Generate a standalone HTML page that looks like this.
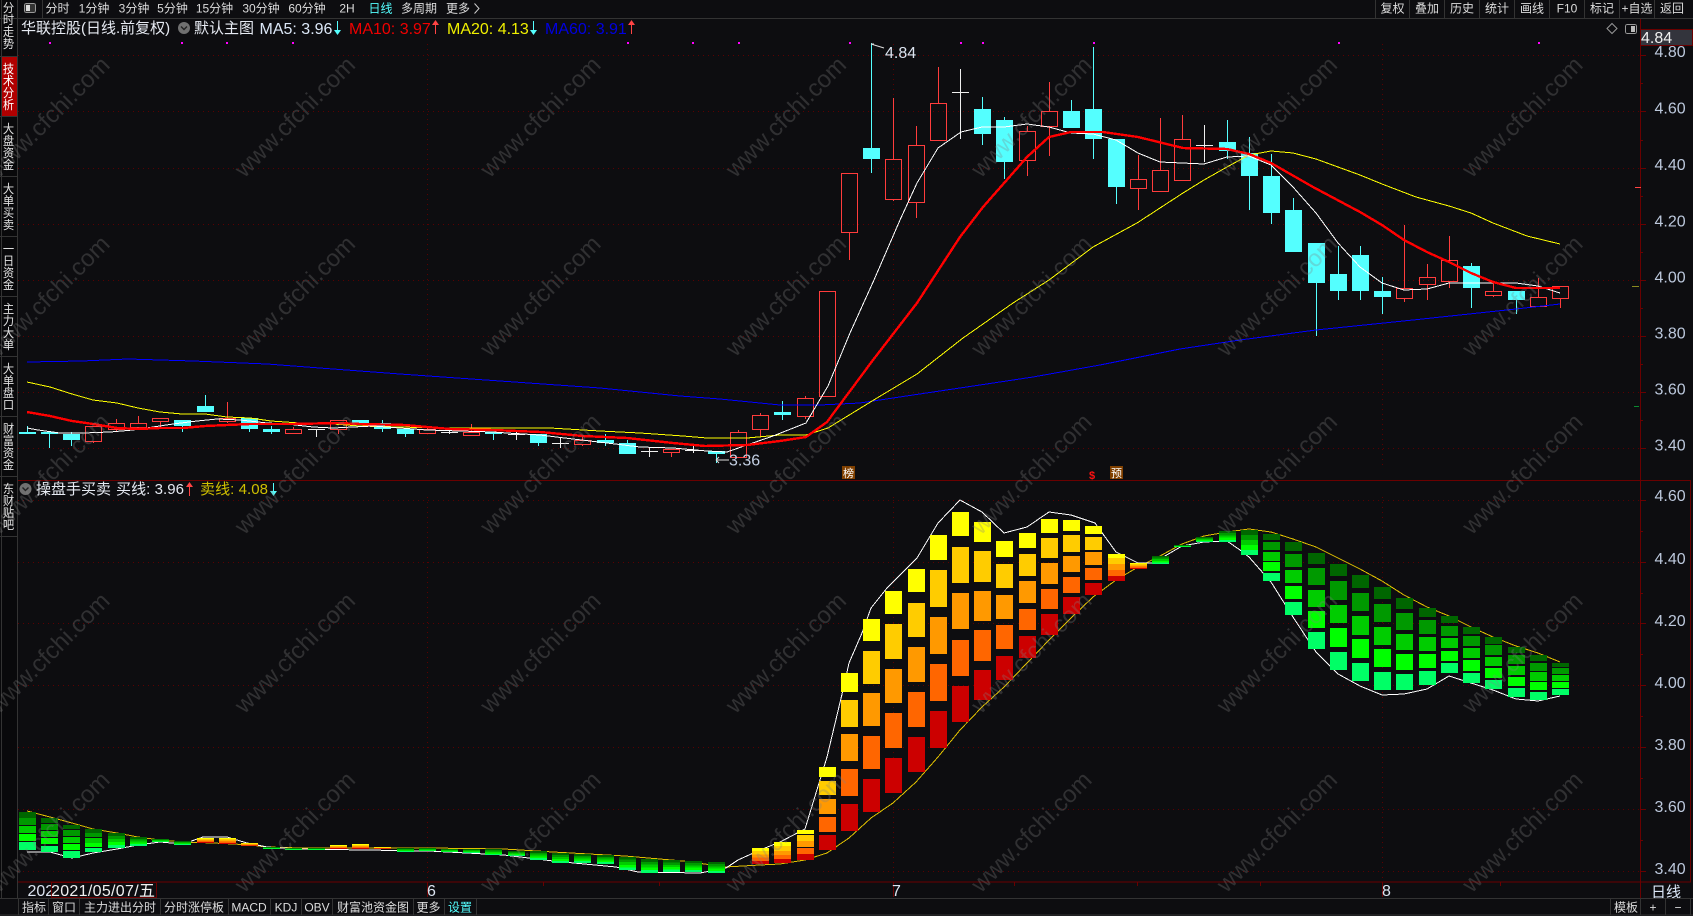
<!DOCTYPE html>
<html lang="zh"><head><meta charset="utf-8"><title>华联控股</title>
<style>
html,body{margin:0;padding:0;background:#0d0d10;width:1693px;height:916px;overflow:hidden}
svg{position:absolute;left:0;top:0;display:block}
text{font-family:"Liberation Sans","Noto Sans CJK SC",sans-serif}
.tb{font-size:12px;fill:#dcdcdc;text-anchor:middle;font-family:"Liberation Sans","WenQuanYi Zen Hei","Noto Sans CJK SC",sans-serif}
.ax{font-size:16px;fill:#bcc8dc}
.lg{font-size:15px}
.lt{font-size:16px}
.side{position:absolute;left:2px;width:13px;font:12px/12px "WenQuanYi Zen Hei","Noto Sans CJK SC",sans-serif;color:#e2e2e2;text-align:center;word-break:break-all;transform:scaleX(.94)}
.wm text{font-size:24px;fill:#808080;fill-opacity:.3;text-anchor:middle}
</style></head><body>
<svg width="1693" height="916" viewBox="0 0 1693 916" shape-rendering="crispEdges">
<defs>
<linearGradient id="w" x1="0" y1="0" x2="0" y2="1"><stop offset="0" stop-color="#ff0"/><stop offset=".2" stop-color="#ff0"/><stop offset=".2" stop-color="#fc0"/><stop offset=".4" stop-color="#fc0"/><stop offset=".4" stop-color="#f90"/><stop offset=".6" stop-color="#f90"/><stop offset=".6" stop-color="#f60"/><stop offset=".8" stop-color="#f60"/><stop offset=".8" stop-color="#c00"/><stop offset="1" stop-color="#c00"/></linearGradient>
<linearGradient id="g" x1="0" y1="0" x2="0" y2="1"><stop offset="0" stop-color="#060"/><stop offset=".2" stop-color="#060"/><stop offset=".2" stop-color="#090"/><stop offset=".4" stop-color="#090"/><stop offset=".4" stop-color="#0c0"/><stop offset=".6" stop-color="#0c0"/><stop offset=".6" stop-color="#0f0"/><stop offset=".8" stop-color="#0f0"/><stop offset=".8" stop-color="#0f6"/><stop offset="1" stop-color="#0f6"/></linearGradient>
</defs>

<!-- sidebar -->
<rect x="0" y="0" width="17" height="898" fill="#09090b"/>
<rect x="1" y="57" width="16" height="59" fill="#b00000"/>
<path d="M17.5 0V898M1.5 0V898M0 56.5H17M0 116.5H17M0 176.5H17M0 236.5H17M0 296.5H17M0 356.5H17M0 416.5H17M0 476.5H17M0 536.5H17" stroke="#333" fill="none"/>

<!-- top toolbar -->
<path d="M0 18.5H1693M42.5 0V18M1375.5 0V18M1409.5 0V18M1444.5 0V18M1479.5 0V18M1514.5 0V18M1549.5 0V18M1584.5 0V18M1619.5 0V18M1654.5 0V18" stroke="#333" fill="none"/>
<rect x="24.5" y="3.5" width="11" height="9" rx="2" fill="#333" stroke="#999"/><rect x="26" y="5" width="4" height="6" fill="#ddd"/>
<text class="tb" x="57.5" y="12.5">分时</text><text class="tb" x="94" y="12.5">1分钟</text><text class="tb" x="134" y="12.5">3分钟</text><text class="tb" x="172.5" y="12.5">5分钟</text><text class="tb" x="214.5" y="12.5">15分钟</text><text class="tb" x="261" y="12.5">30分钟</text><text class="tb" x="307" y="12.5">60分钟</text><text class="tb" x="347" y="12.5">2H</text><text class="tb" x="380.5" y="12.5" style="fill:#5ff">日线</text><text class="tb" x="419" y="12.5">多周期</text><text class="tb" x="458" y="12.5">更多</text>
<path d="M474.5 3.5L479 8.5L474.5 13.5" stroke="#ccc" fill="none" shape-rendering="auto"/>
<text class="tb" x="1392.5" y="12.5">复权</text><text class="tb" x="1427" y="12.5">叠加</text><text class="tb" x="1462" y="12.5">历史</text><text class="tb" x="1497" y="12.5">统计</text><text class="tb" x="1532" y="12.5">画线</text><text class="tb" x="1567" y="12.5">F10</text><text class="tb" x="1602" y="12.5">标记</text><text class="tb" x="1637" y="12.5">+自选</text><text class="tb" x="1672" y="12.5">返回</text>

<!-- grid -->
<g stroke="#5c0000" stroke-dasharray="1 4" fill="none">
<path d="M18 55.5H1640M18 111.5H1640M18 168.5H1640M18 224.5H1640M18 280.5H1640M18 336.5H1640M18 392.5H1640M18 448.5H1640M18 500.5H1640M18 562.5H1640M18 623.5H1640M18 685.5H1640M18 747.5H1640M18 809.5H1640M18 871.5H1640"/>
<path d="M427.5 44V466M893.5 44V466M1382.5 44V466M427.5 497V881M893.5 497V881M1382.5 497V881"/>
</g>

<!-- frame -->
<path d="M18 480.5H1640M18 882H1691M1640.5 19V898M1690.5 480V882M1640 480.5H1691" stroke="#6a0000" fill="none"/>
<path d="M1640 55.5h6M1640 83.5h3M1640 111.5h6M1640 140.5h3M1640 168.5h6M1640 196.5h3M1640 224.5h6M1640 252.5h3M1640 280.5h6M1640 308.5h3M1640 336.5h6M1640 364.5h3M1640 392.5h6M1640 420.5h3M1640 448.5h6M1640 500.5h6M1640 531.5h3M1640 562.5h6M1640 593.5h3M1640 623.5h6M1640 654.5h3M1640 685.5h6M1640 716.5h3M1640 747.5h6M1640 778.5h3M1640 809.5h6M1640 840.5h3M1640 871.5h6" stroke="#6a0000" fill="none"/>
<path d="M1635 187.5h6" stroke="#f44" fill="none"/><path d="M1632 286.5h7" stroke="#8a8a20" fill="none"/><path d="M1634 406.5h5" stroke="#0a8a30" fill="none"/>

<!-- magenta markers -->
<path d="M49 42h2v2h-2zM181 42h2v2h-2zM226 42h2v2h-2zM292 42h2v2h-2zM627 42h2v2h-2zM692 42h2v2h-2zM738 42h2v2h-2zM849 42h2v2h-2zM960 42h2v2h-2zM982 42h2v2h-2zM1093 42h2v2h-2zM1338 42h2v2h-2zM1538 42h2v2h-2z" fill="#f0f"/>

<!-- red candles -->
<path fill="none" stroke="#ff3c3c" d="M85.5 426.5h16V441.5h-16zM93.5 441.5V443M108.5 423.5h16V429.5h-16zM116.5 419V423M116.5 429.5V432M130.5 423.5h16V427.5h-16zM138.5 416V423M152.5 418.5h16V421.5h-16zM160.5 421.5V427M219.5 418.5h16V421.5h-16zM227.5 402V418M227.5 421.5V423M285.5 429.5h16V433.5h-16zM293.5 427V429M330.5 420.5h16V429.5h-16zM338.5 429.5V434M419.5 429.5h16V433.5h-16zM427.5 427V429M463.5 432.5h16V435.5h-16zM471.5 424V432M574.5 440.5h16V444.5h-16zM582.5 437V440M582.5 444.5V446M663.5 449.5h16V452.5h-16zM671.5 452.5V457M730.5 432.5h16V457.5h-16zM738.5 430V432M752.5 415.5h16V429.5h-16zM760.5 413V415M760.5 429.5V437M797.5 398.5h16V416.5h-16zM805.5 396V398M805.5 416.5V419M819.5 291.5h16V396.5h-16zM841.5 173.5h16V232.5h-16zM849.5 232.5V260M885.5 159.5h16V199.5h-16zM893.5 98V159M893.5 199.5V201M908.5 145.5h16V202.5h-16zM916.5 126V145M916.5 202.5V218M930.5 103.5h16V140.5h-16zM938.5 67V103M1019.5 131.5h16V160.5h-16zM1027.5 126V131M1027.5 160.5V176M1041.5 111.5h16V126.5h-16zM1049.5 82V111M1049.5 126.5V156M1130.5 179.5h16V188.5h-16zM1138.5 155V179M1138.5 188.5V210M1152.5 170.5h16V191.5h-16zM1160.5 118V170M1174.5 139.5h16V180.5h-16zM1182.5 115V139M1396.5 288.5h16V298.5h-16zM1404.5 225V288M1404.5 298.5V302M1419.5 277.5h16V284.5h-16zM1427.5 264V277M1427.5 284.5V300M1441.5 260.5h16V281.5h-16zM1449.5 236V260M1449.5 281.5V288M1485.5 291.5h16V295.5h-16zM1493.5 281V291M1493.5 295.5V297M1530.5 297.5h16V306.5h-16zM1538.5 278V297M1538.5 306.5V307M1552.5 286.5h16V298.5h-16zM1560.5 298.5V308"/>
<!-- cyan candles -->
<path fill="none" stroke="#54ffff" d="M27.5 426V434M49.5 434V448M71.5 432V446M182.5 426V432M205.5 395V406M249.5 429V432M271.5 426V434M382.5 420V432M405.5 434V437M493.5 434V440M538.5 443V446M605.5 434V446M627.5 440V443M716.5 454V463M782.5 401V420M871.5 43V173M982.5 97V145M1004.5 117V179M1071.5 100V128M1093.5 47V159M1116.5 187V204M1227.5 120V159M1249.5 137V210M1271.5 154V224M1293.5 198V210M1316.5 283V336M1338.5 246V300M1360.5 246V300M1382.5 277V314M1471.5 263V308M1516.5 300V314"/>
<path fill="#54ffff" d="M19 432h17V434h-17zM41 432h17V434h-17zM63 434h17V440h-17zM174 420h17V426h-17zM197 406h17V412h-17zM241 418h17V429h-17zM263 429h17V432h-17zM352 420h17V423h-17zM374 423h17V429h-17zM397 429h17V434h-17zM485 432h17V434h-17zM530 434h17V443h-17zM597 440h17V443h-17zM619 443h17V454h-17zM708 451h17V454h-17zM774 412h17V415h-17zM863 148h17V159h-17zM974 109h17V134h-17zM996 120h17V162h-17zM1063 111h17V128h-17zM1085 109h17V139h-17zM1108 139h17V187h-17zM1219 142h17V151h-17zM1241 153h17V176h-17zM1263 176h17V213h-17zM1285 210h17V252h-17zM1308 243h17V283h-17zM1330 274h17V291h-17zM1352 255h17V291h-17zM1374 291h17V297h-17zM1463 266h17V288h-17zM1508 291h17V300h-17z"/>
<!-- doji -->
<path fill="none" stroke="#eee" d="M308 429.5h17M316.5 429V437M441 432.5h17M449.5 428V434M508 434.5h17M516.5 431V440M552 443.5h17M560.5 437V448M641 451.5h17M649.5 448V457M685 450.5h17M693.5 446V453M952 92.5h17M960.5 69V139M1196 145.5h17M1204.5 125V162"/>

<!-- MA lines -->
<polyline fill="none" stroke="#0000ff" stroke-width="1" points="27,362 82,361 128,359 193,361 267,364 333,369 400,374 500,381 600,388 680,396 720,399 780,405 820,405 860,403 913,395 980,385 1033,377 1100,365 1180,349 1240,340 1316,330 1413,320 1516,309 1560,304"/>
<polyline fill="none" stroke="#ffff00" stroke-width="1" points="27,382 50,387 72,394 93,400 117,403 138,408 160,412 182,414 205,414 227,417 250,418 271,421 300,423 333,424 360,426 400,427 440,428 550,428 600,431 640,433 683,436 707,438 747,438 780,435 806,435 828,428 877,398 917,374 963,338 1013,303 1049,280 1093,247 1137,223 1183,193 1204,180 1227,167 1249,155 1271,151 1293,153 1316,159 1360,175 1382,184 1416,197 1449,206 1471,213 1493,223 1527,236 1560,244"/>
<polyline fill="none" stroke="#ffffff" stroke-width="1" points="27,428 38,430 60,433 83,433 110,432 133,430 153,427 173,424 197,421 217,419 240,420 267,423 287,424 313,427 333,428 353,427 373,426 400,428 427,430 460,431 493,432 507,433 540,435 573,439 607,443 640,447 673,448 707,451 727,452 747,445 773,436 806,423 828,386 850,333 874,280 900,220 917,183 938,148 961,132 982,127 1004,127 1027,124 1049,127 1071,133 1093,134 1116,140 1138,153 1160,162 1182,163 1204,164 1227,157 1249,156 1271,165 1293,187 1316,213 1338,243 1360,267 1382,283 1404,290 1427,289 1449,283 1471,283 1493,283 1516,283 1538,286 1560,293"/>
<polyline fill="none" stroke="#ff0000" stroke-width="2.4" points="27,412 50,416 72,421 93,424 117,428 138,429 160,428 183,428 205,426 227,425 250,424 293,424 338,423 360,424 405,425 427,427 450,429 493,430 540,432 583,436 627,438 673,443 705,446 747,445 780,441 806,437 827,422 873,360 917,303 945,260 960,237 983,207 1005,182 1027,157 1049,137 1071,132 1103,132 1138,137 1183,148 1227,149 1249,154 1271,163 1313,187 1360,212 1382,225 1404,240 1427,252 1449,262 1471,273 1493,282 1516,288 1560,288"/>

<!-- peak labels -->
<path d="M871 44h3M871 44l13 4M716 460h13M716 460l3-3M716 460l3 3" stroke="#ddd" fill="none" shape-rendering="auto"/>
<text class="lt" x="885" y="58" fill="#dce4f0">4.84</text>
<text class="lt" x="729" y="465.5" fill="#c4d0e4">3.36</text>

<!-- event tags -->
<rect x="842" y="466" width="13" height="13" fill="#804000"/>
<text x="848.5" y="477" font-size="11" text-anchor="middle" fill="#fff">榜</text>
<text x="1092" y="479" font-size="11" text-anchor="middle" fill="#f11" font-weight="bold">$</text>
<rect x="1110" y="466" width="13" height="13" fill="#804000"/>
<text x="1116.5" y="477" font-size="11" text-anchor="middle" fill="#fff">预</text>

<!-- lower panel lines -->
<polyline fill="none" stroke="#e0c000" stroke-width="1" points="27,811 50,817 72,823 93,829 117,833 138,837 160,840 183,842 213,843 233,844 250,845 267,847 300,848 429,848 504,849 553,852 625,856 683,861 726,867 760,865 780,864 805,860 827,853 849,838 871,818 893,803 916,782 938,757 960,730 982,707 1004,687 1027,663 1049,640 1071,618 1093,597 1116,580 1138,567 1160,556 1182,544 1204,536 1227,532 1249,529 1271,532 1293,539 1316,547 1338,558 1360,569 1382,581 1404,595 1427,607 1449,616 1471,627 1493,637 1516,646 1538,653 1560,662"/>
<polyline fill="none" stroke="#ffffff" stroke-width="1" points="27,852 50,852 72,858 93,853 117,849 138,845 160,842 183,844 203,837 227,837 247,843 267,847 300,849 429,851 504,855 553,861 616,867 638,872 700,873 726,868 738,860 760,850 780,842 805,829 827,757 843,690 849,663 862,633 871,608 887,588 905,570 917,558 938,523 960,500 982,512 1004,533 1027,527 1049,512 1071,515 1095,523 1116,552 1138,563 1153,563 1182,546 1204,542 1227,541 1240,550 1249,557 1271,582 1293,617 1316,652 1338,674 1360,686 1382,695 1404,694 1427,689 1449,676 1471,683 1493,690 1516,699 1538,701 1560,696"/>

<!-- warm bars -->
<path fill="#ffff00" d="M774 842h17V846h-17zM797 830h17V834h-17zM819 767h17V777h-17zM841 673h17V692h-17zM863 619h17V641h-17zM885 591h17V614h-17zM908 569h17V592h-17zM930 535h17V560h-17zM952 512h17V536h-17zM974 522h17V542h-17zM996 541h17V557h-17zM1019 533h17V548h-17zM1041 519h17V533h-17zM1063 520h17V531h-17zM1085 526h17V534h-17zM1108 554h17V558h-17z"/>
<path fill="#ffcc00" d="M774 846h17V851h-17zM797 835h17V841h-17zM819 781h17V795h-17zM841 700h17V727h-17zM863 651h17V684h-17zM885 624h17V659h-17zM908 603h17V637h-17zM930 570h17V607h-17zM952 547h17V583h-17zM974 551h17V582h-17zM996 564h17V588h-17zM1019 554h17V576h-17zM1041 538h17V558h-17zM1063 535h17V552h-17zM1085 537h17V550h-17zM1108 558h17V564h-17z"/>
<path fill="#ff9900" d="M774 851h17V855h-17zM797 841h17V847h-17zM819 799h17V814h-17zM841 734h17V761h-17zM863 693h17V726h-17zM885 669h17V703h-17zM908 647h17V682h-17zM930 617h17V654h-17zM952 593h17V629h-17zM974 591h17V621h-17zM996 595h17V619h-17zM1019 581h17V603h-17zM1041 563h17V584h-17zM1063 556h17V572h-17zM1085 552h17V565h-17zM1108 564h17V570h-17z"/>
<path fill="#ff6600" d="M774 855h17V859h-17zM797 848h17V854h-17zM819 817h17V832h-17zM841 769h17V796h-17zM863 736h17V769h-17zM885 713h17V748h-17zM908 692h17V727h-17zM930 664h17V701h-17zM952 640h17V676h-17zM974 630h17V661h-17zM996 625h17V649h-17zM1019 609h17V630h-17zM1041 589h17V609h-17zM1063 577h17V593h-17zM1085 568h17V580h-17zM1108 570h17V576h-17z"/>
<path fill="#cc0000" d="M774 859h17V863h-17zM797 854h17V860h-17zM819 835h17V850h-17zM841 804h17V831h-17zM863 779h17V812h-17zM885 758h17V793h-17zM908 737h17V772h-17zM930 711h17V748h-17zM952 686h17V722h-17zM974 670h17V700h-17zM996 656h17V680h-17zM1019 636h17V658h-17zM1041 614h17V635h-17zM1063 597h17V614h-17zM1085 583h17V595h-17zM1108 576h17V581h-17z"/>
<g fill="url(#w)">
<rect x="197" y="838" width="17" height="5"/><rect x="219" y="838" width="17" height="6"/><rect x="241" y="843" width="17" height="3"/><rect x="330" y="845" width="17" height="4"/><rect x="352" y="844" width="17" height="5"/><rect x="374" y="847" width="17" height="2"/><rect x="752" y="848" width="17" height="16"/><rect x="1130" y="563" width="17" height="6"/>
</g>
<!-- green bars -->
<path fill="#006600" d="M19 812h17V818h-17zM41 818h17V823h-17zM63 825h17V829h-17zM85 829h17V833h-17zM1263 534h17V540h-17zM1285 542h17V551h-17zM1308 553h17V564h-17zM1330 564h17V576h-17zM1352 575h17V588h-17zM1374 587h17V599h-17zM1396 598h17V609h-17zM1419 608h17V617h-17zM1441 616h17V623h-17zM1463 627h17V634h-17zM1485 637h17V644h-17zM1508 647h17V653h-17zM1530 655h17V661h-17zM1552 663h17V667h-17z"/>
<path fill="#009900" d="M19 818h17V825h-17zM41 824h17V830h-17zM63 830h17V836h-17zM85 833h17V837h-17zM1263 542h17V550h-17zM1285 554h17V567h-17zM1308 568h17V585h-17zM1330 581h17V600h-17zM1352 593h17V611h-17zM1374 604h17V622h-17zM1396 613h17V630h-17zM1419 620h17V634h-17zM1441 626h17V636h-17zM1463 636h17V646h-17zM1485 645h17V655h-17zM1508 655h17V664h-17zM1530 663h17V671h-17zM1552 668h17V674h-17z"/>
<path fill="#00cc00" d="M19 826h17V833h-17zM41 831h17V837h-17zM63 837h17V843h-17zM85 838h17V843h-17zM1263 552h17V561h-17zM1285 570h17V583h-17zM1308 590h17V607h-17zM1330 605h17V623h-17zM1352 616h17V635h-17zM1374 627h17V645h-17zM1396 634h17V650h-17zM1419 637h17V651h-17zM1441 638h17V648h-17zM1463 648h17V658h-17zM1485 657h17V666h-17zM1508 666h17V675h-17zM1530 672h17V681h-17zM1552 675h17V681h-17z"/>
<path fill="#00ff00" d="M19 834h17V841h-17zM41 838h17V844h-17zM63 844h17V850h-17zM85 843h17V847h-17zM1263 562h17V571h-17zM1285 586h17V599h-17zM1308 611h17V628h-17zM1330 628h17V647h-17zM1352 639h17V658h-17zM1374 649h17V667h-17zM1396 654h17V670h-17zM1419 654h17V668h-17zM1441 651h17V661h-17zM1463 660h17V671h-17zM1485 668h17V678h-17zM1508 677h17V686h-17zM1530 682h17V690h-17zM1552 682h17V688h-17z"/>
<path fill="#00ff66" d="M19 842h17V850h-17zM41 846h17V852h-17zM63 851h17V858h-17zM85 848h17V852h-17zM1263 573h17V581h-17zM1285 602h17V615h-17zM1308 632h17V649h-17zM1330 652h17V670h-17zM1352 663h17V681h-17zM1374 672h17V690h-17zM1396 674h17V690h-17zM1419 671h17V685h-17zM1441 663h17V673h-17zM1463 673h17V683h-17zM1485 680h17V689h-17zM1508 688h17V697h-17zM1530 692h17V700h-17zM1552 689h17V695h-17z"/>
<g fill="url(#g)">
<rect x="108" y="833" width="17" height="15"/><rect x="130" y="837" width="17" height="9"/><rect x="152" y="839" width="17" height="3"/><rect x="174" y="841" width="17" height="4"/><rect x="263" y="847" width="17" height="2"/><rect x="285" y="848" width="17" height="2"/><rect x="308" y="848" width="17" height="2"/><rect x="397" y="848" width="17" height="4"/><rect x="419" y="848" width="17" height="3"/><rect x="441" y="849" width="17" height="3"/><rect x="463" y="849" width="17" height="4"/><rect x="485" y="849" width="17" height="6"/><rect x="508" y="851" width="17" height="5"/><rect x="530" y="851" width="17" height="9"/><rect x="552" y="853" width="17" height="10"/><rect x="574" y="854" width="17" height="9"/><rect x="597" y="855" width="17" height="9"/><rect x="619" y="857" width="17" height="13"/><rect x="641" y="859" width="17" height="14"/><rect x="663" y="860" width="17" height="12"/><rect x="685" y="861" width="17" height="11"/><rect x="708" y="862" width="17" height="11"/><rect x="1152" y="556" width="17" height="8"/><rect x="1174" y="545" width="17" height="2"/><rect x="1196" y="537" width="17" height="5"/><rect x="1219" y="531" width="17" height="11"/><rect x="1241" y="530" width="17" height="25"/>
</g>

<!-- legends -->
<text class="lg" x="21" y="33" fill="#e6eaf2">华联控股(日线.前复权)</text>
<circle cx="184" cy="28" r="6" fill="#707070" shape-rendering="auto"/><path d="M181 26.5l3 3 3-3" stroke="#222" stroke-width="1.4" fill="none" shape-rendering="auto"/>
<text class="lg" x="194" y="33" fill="#e6eaf2">默认主图</text>
<text class="lt" x="259.5" y="34" fill="#dce8f8">MA5: 3.96</text>
<path d="M337.5 21V33" stroke="#5ff"/><path d="M334 30h7l-3.5 5z" fill="#5ff" shape-rendering="auto"/>
<text class="lt" x="349" y="34" fill="#f00000">MA10: 3.97</text>
<path d="M435.5 24V34" stroke="#f44"/><path d="M432 25h7l-3.5-5z" fill="#f44" shape-rendering="auto"/>
<text class="lt" x="447" y="34" fill="#f0f000">MA20: 4.13</text>
<path d="M533.5 21V33" stroke="#5ff"/><path d="M530 30h7l-3.5 5z" fill="#5ff" shape-rendering="auto"/>
<text class="lt" x="545" y="34" fill="#0000e0">MA60: 3.91</text>
<path d="M631.5 24V34" stroke="#f44"/><path d="M628 25h7l-3.5-5z" fill="#f44" shape-rendering="auto"/>

<circle cx="25.5" cy="489" r="6" fill="#707070" shape-rendering="auto"/><path d="M22.5 487.5l3 3 3-3" stroke="#222" stroke-width="1.4" fill="none" shape-rendering="auto"/>
<text class="lg" x="36" y="494" fill="#e6eaf2">操盘手买卖</text>
<text class="lg" x="116" y="494" fill="#e6eaf2" textLength="68">买线: 3.96</text>
<path d="M189.5 486V496" stroke="#f44"/><path d="M186 487h7l-3.5-5z" fill="#f44" shape-rendering="auto"/>
<text class="lg" x="200" y="494" fill="#d0c000" textLength="68">卖线: 4.08</text>
<path d="M273.5 483V494" stroke="#5ff"/><path d="M270 491h7l-3.5 5z" fill="#5ff" shape-rendering="auto"/>

<!-- axis labels -->
<rect x="1640.5" y="29.5" width="52" height="16" fill="#33343c" stroke="#6a0000"/>
<text class="ax" x="1641" y="43" style="fill:#f0f0f0">4.84</text>
<text class="ax" x="1654.5" y="57">4.80</text><text class="ax" x="1654.5" y="113.5">4.60</text><text class="ax" x="1654.5" y="170">4.40</text><text class="ax" x="1654.5" y="226.5">4.20</text><text class="ax" x="1654.5" y="282.5">4.00</text><text class="ax" x="1654.5" y="338.5">3.80</text><text class="ax" x="1654.5" y="394.5">3.60</text><text class="ax" x="1654.5" y="450.5">3.40</text>
<text class="ax" x="1654.5" y="501">4.60</text><text class="ax" x="1654.5" y="564">4.40</text><text class="ax" x="1654.5" y="626">4.20</text><text class="ax" x="1654.5" y="688">4.00</text><text class="ax" x="1654.5" y="750">3.80</text><text class="ax" x="1654.5" y="812">3.60</text><text class="ax" x="1654.5" y="874">3.40</text>

<!-- date axis -->
<path d="M427.5 882V897M893.5 882V897M1382.5 882V897M543.5 882V886M659.5 882V886M1014.5 882V886M1137.5 882V886M1260.5 882V886M1500.5 882V886" stroke="#6a0000" fill="none"/>
<text class="ax" x="27.5" y="896" style="fill:#dce4f0">202</text>
<rect x="51.5" y="882.5" width="105" height="15" fill="#0d0d10" stroke="#6a0000"/>
<text class="ax" x="51" y="896" style="fill:#f0f0f0" textLength="104">2021/05/07/五</text>
<text class="ax" x="427" y="896" style="fill:#dce4f0">6</text><text class="ax" x="892" y="896" style="fill:#dce4f0">7</text><text class="ax" x="1382" y="896" style="fill:#dce4f0">8</text>
<text x="1666" y="897" font-size="15" text-anchor="middle" fill="#dce8f8">日线</text>

<!-- bottom toolbar -->
<path d="M0 898.5H1693M0 915H1693M18.5 898V915M48.5 898V915M79.5 898V915M160.5 898V915M228.5 898V915M270.5 898V915M301.5 898V915M332.5 898V915M413.5 898V915M444.5 898V915M476.5 898V915M1610.5 898V915M1640.5 898V915M1665.5 898V915M1690.5 898V915" stroke="#333" fill="none"/>
<g transform="translate(0,-0.5)">
<text class="tb" x="34" y="912">指标</text><text class="tb" x="64" y="912">窗口</text><text class="tb" x="120" y="912">主力进出分时</text><text class="tb" x="194" y="912">分时涨停板</text><text class="tb" x="249" y="912">MACD</text><text class="tb" x="286" y="912">KDJ</text><text class="tb" x="317" y="912">OBV</text><text class="tb" x="373" y="912">财富池资金图</text><text class="tb" x="428.5" y="912">更多</text><text class="tb" x="460" y="912" style="fill:#5ff">设置</text><text class="tb" x="1626" y="912">模板</text><text class="tb" x="1653" y="912">+</text><text class="tb" x="1678" y="912">−</text>
</g>

<!-- top right icons -->
<path d="M1612 23.5L1617 28.5L1612 33.5L1607 28.5Z" fill="none" stroke="#999" shape-rendering="auto"/>
<rect x="1625.5" y="24.5" width="11" height="9" rx="2" fill="none" stroke="#999"/><rect x="1631" y="26" width="4" height="6" fill="#bbb"/>

<!-- watermark -->
<g class="wm" shape-rendering="auto" transform="translate(4.5,4.5)">
<text transform="translate(50.5,118) rotate(-45)">www.cfchi.com</text><text transform="translate(296,118) rotate(-45)">www.cfchi.com</text><text transform="translate(541.5,118) rotate(-45)">www.cfchi.com</text><text transform="translate(787,118) rotate(-45)">www.cfchi.com</text><text transform="translate(1032.5,118) rotate(-45)">www.cfchi.com</text><text transform="translate(1278,118) rotate(-45)">www.cfchi.com</text><text transform="translate(1523.5,118) rotate(-45)">www.cfchi.com</text>
<text transform="translate(50.5,297) rotate(-45)">www.cfchi.com</text><text transform="translate(296,297) rotate(-45)">www.cfchi.com</text><text transform="translate(541.5,297) rotate(-45)">www.cfchi.com</text><text transform="translate(787,297) rotate(-45)">www.cfchi.com</text><text transform="translate(1032.5,297) rotate(-45)">www.cfchi.com</text><text transform="translate(1278,297) rotate(-45)">www.cfchi.com</text><text transform="translate(1523.5,297) rotate(-45)">www.cfchi.com</text>
<text transform="translate(50.5,475) rotate(-45)">www.cfchi.com</text><text transform="translate(296,475) rotate(-45)">www.cfchi.com</text><text transform="translate(541.5,475) rotate(-45)">www.cfchi.com</text><text transform="translate(787,475) rotate(-45)">www.cfchi.com</text><text transform="translate(1032.5,475) rotate(-45)">www.cfchi.com</text><text transform="translate(1278,475) rotate(-45)">www.cfchi.com</text><text transform="translate(1523.5,475) rotate(-45)">www.cfchi.com</text>
<text transform="translate(50.5,654) rotate(-45)">www.cfchi.com</text><text transform="translate(296,654) rotate(-45)">www.cfchi.com</text><text transform="translate(541.5,654) rotate(-45)">www.cfchi.com</text><text transform="translate(787,654) rotate(-45)">www.cfchi.com</text><text transform="translate(1032.5,654) rotate(-45)">www.cfchi.com</text><text transform="translate(1278,654) rotate(-45)">www.cfchi.com</text><text transform="translate(1523.5,654) rotate(-45)">www.cfchi.com</text>
<text transform="translate(50.5,833) rotate(-45)">www.cfchi.com</text><text transform="translate(296,833) rotate(-45)">www.cfchi.com</text><text transform="translate(541.5,833) rotate(-45)">www.cfchi.com</text><text transform="translate(787,833) rotate(-45)">www.cfchi.com</text><text transform="translate(1032.5,833) rotate(-45)">www.cfchi.com</text><text transform="translate(1278,833) rotate(-45)">www.cfchi.com</text><text transform="translate(1523.5,833) rotate(-45)">www.cfchi.com</text>
</g>
</svg>
<div class="side" style="top:2px">分时走势</div>
<div class="side" style="top:63px;color:#fff">技术分析</div>
<div class="side" style="top:123px">大盘资金</div>
<div class="side" style="top:183px">大单买卖</div>
<div class="side" style="top:243px">一日资金</div>
<div class="side" style="top:303px">主力大单</div>
<div class="side" style="top:363px">大单盘口</div>
<div class="side" style="top:423px">财富资金</div>
<div class="side" style="top:483px">东财贴吧</div>
</body></html>
